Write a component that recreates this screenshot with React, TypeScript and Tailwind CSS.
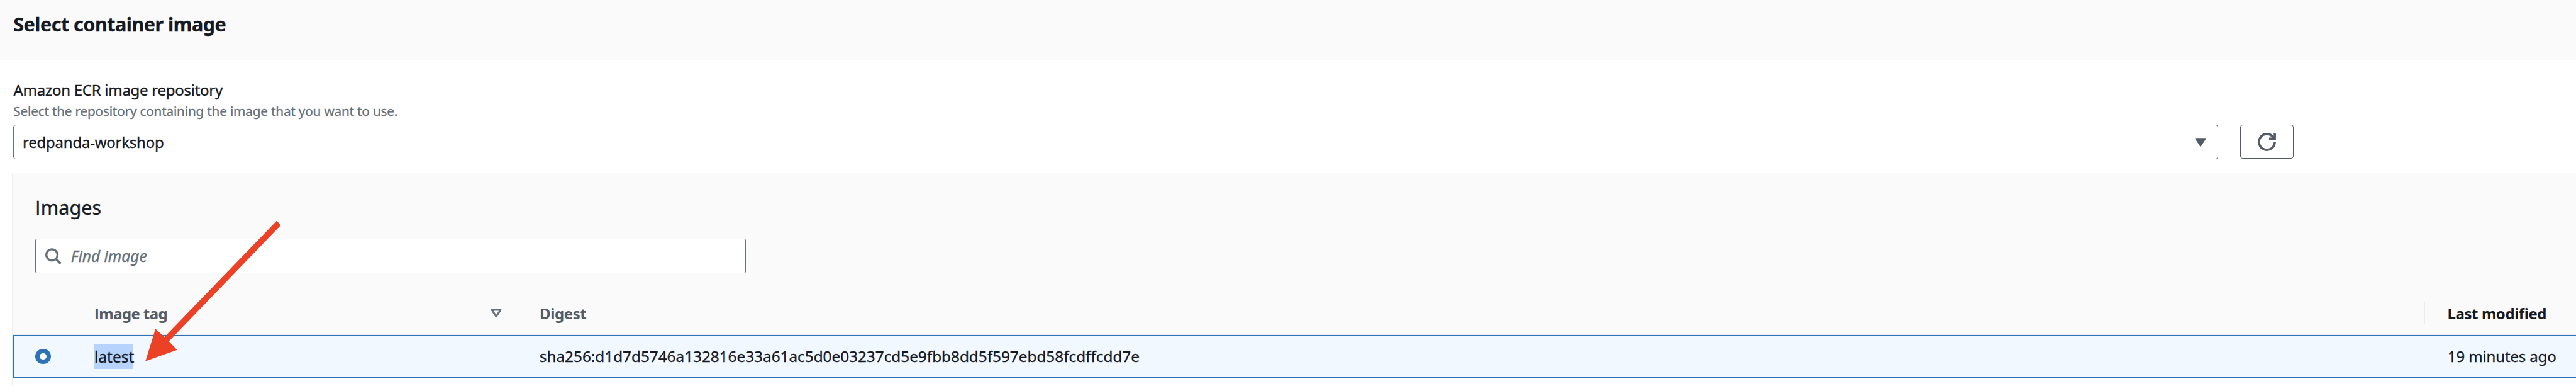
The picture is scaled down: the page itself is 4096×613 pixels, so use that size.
import React from "react";

const DIGEST = "sha256:d1d7d5746a132816e33a61ac5d0e03237cd5e9fbb8dd5f597ebd58fcdffcdd7e";

function SerifFreeI() {
  return <span className="font-['Open_Sans']">I</span>;
}

function Header() {
  return (
    <header className="h-24 border-b border-[#eaeded] bg-[#fafafa] pt-[18px] pl-[21.3px]">
      <h1 className="text-[30.5px] leading-10 font-bold tracking-[-0.49px]">Select container image</h1>
    </header>
  );
}

function RefreshIcon() {
  return (
    <svg viewBox="0 0 29 29" className="h-[29px] w-[29px]" fill="none" stroke="#545b64" strokeWidth="3.6">
      <path d="M27.1 14.5A12.6 12.6 0 1 1 24.2 6.4L26.6 9.3" />
      <path d="M27.1 0.3V9.3H18" />
    </svg>
  );
}

function RepositoryField() {
  return (
    <section className="pt-8 pl-[21px]">
      <div className="pl-[0.5px] text-[24px] leading-[30px] tracking-[-0.27px]">Amazon ECR image repository</div>
      <div className="mt-[5px] pl-[0.3px] text-[20.7px] leading-[26px] tracking-[-0.167px] text-[#687078]">
        Select the repository containing the image that you want to use.
      </div>
      <div className="mt-[9px] flex gap-[35px]">
        <button className="flex h-[55px] w-[3506px] items-center justify-between rounded-[4px] border border-[#687078] bg-white pr-[18px] pl-[14px]">
          <span className="text-[24px] leading-[30px] tracking-[-0.23px]">redpanda-workshop</span>
          <svg viewBox="0 0 18 14" className="h-[14px] w-[18px]" fill="#545b64" stroke="#545b64" strokeWidth="2" strokeLinejoin="round">
            <path d="M1.4 1.2H16.6L9 12.6Z" />
          </svg>
        </button>
        <button className="flex h-[54px] w-[85px] items-center justify-center rounded-[4px] border border-[#545b64] bg-white">
          <RefreshIcon />
        </button>
      </div>
    </section>
  );
}

function SearchBox() {
  return (
    <div className="mt-[30px] ml-[35px] flex h-[55px] w-[1130px] items-center rounded-[3px] border border-[#687078] bg-white pl-[14.5px]">
      <svg viewBox="0 0 26 26" className="h-[26px] w-[26px]" fill="none" stroke="#687078" strokeWidth="3.4">
        <circle cx="10.6" cy="10.8" r="8.9" />
        <path d="M16.9 17.1L24.5 24.6" strokeWidth="3.8" />
      </svg>
      <span className="ml-[15.3px] text-[24.5px] leading-[30px] text-[#687078] italic">Find image</span>
    </div>
  );
}

const COLS = "grid grid-cols-[94px_709px_3032px_1fr]";

function HeadCell({ children, className }: { children?: React.ReactNode; className: string }) {
  return (
    <div className="flex items-center">
      <div className={"flex h-[35px] flex-1 items-center justify-between " + className}>{children}</div>
    </div>
  );
}

function ImagesTable() {
  return (
    <div>
      <div className={COLS + " h-[69px] border-y border-[#eaeded] bg-[#fafafa] text-[24px] leading-[30px] font-bold text-[#545b64] [-webkit-text-stroke:0px]"}>
        <HeadCell className="border-r border-[#eaeded]" />
        <HeadCell className="border-r border-[#eaeded] pr-[25.5px] pl-[35px]">
          <span className="tracking-[-0.6px]"><SerifFreeI />mage tag</span>
          <svg viewBox="0 0 18 15" className="h-[15px] w-[18px]" fill="none" stroke="#687078" strokeWidth="3" strokeLinejoin="round">
            <path d="M2 2H16L9 12.6Z" />
          </svg>
        </HeadCell>
        <HeadCell className="border-r border-[#eaeded] pl-[34px]">
          <span className="tracking-[-0.4px]">Digest</span>
        </HeadCell>
        <HeadCell className="pl-[35.6px]">
          <span className="tracking-[-0.44px] text-[#16191f]">Last modified</span>
        </HeadCell>
      </div>
      <div className="grid h-[68px] grid-cols-[93px_709px_3032px_1fr] items-center border-y border-l border-[#2e73b8] bg-[#f1f8ff] leading-[30px]">
        <div className="pl-[34px]">
          <div className="flex size-[24.5px] items-center justify-center rounded-full bg-[#2e73b8]">
            <div className="size-[10.5px] rounded-full bg-white" />
          </div>
        </div>
        <div className="pl-[35px]">
          <span className="inline-block h-[39px] w-[62px] bg-[#b5d3fc] align-middle text-[24.5px] leading-[39px]">latest</span>
        </div>
        <div className="pl-[33.8px] text-[24.3px]">{DIGEST}</div>
        <div className="pl-[36px] text-[24px] tracking-[-0.15px]">19 minutes ago</div>
      </div>
    </div>
  );
}

function PointerArrow() {
  return (
    <svg viewBox="230 350 240 250" className="absolute top-[339.4px] left-[223px] h-[242.4px] w-[232.7px]" fill="#eb4126">
      <path d="M238.5 592L255 539L269.7 552.3L453.7 362L460.7 369L277 559.3L290.5 573.5Z" />
    </svg>
  );
}

export default function App() {
  return (
    <div className="relative flex h-[613px] w-[4096px] flex-col overflow-hidden bg-white font-['Noto_Sans',sans-serif] whitespace-nowrap text-[#16191f] [-webkit-text-stroke:0.35px]">
      <Header />
      <RepositoryField />
      <section className="mt-[21px] ml-5 flex-1 border-t border-l border-t-[#eaeded] border-l-[#c6c9c9] shadow-[-1px_0_0_#eeeeee]">
        <div className="h-[188px] bg-[#fafafa] pt-[34px]">
          <h2 className="pl-[35px] text-[30.5px] leading-10 tracking-[0.1px]"><SerifFreeI />mages</h2>
          <SearchBox />
        </div>
        <ImagesTable />
      </section>
      <PointerArrow />
    </div>
  );
}
